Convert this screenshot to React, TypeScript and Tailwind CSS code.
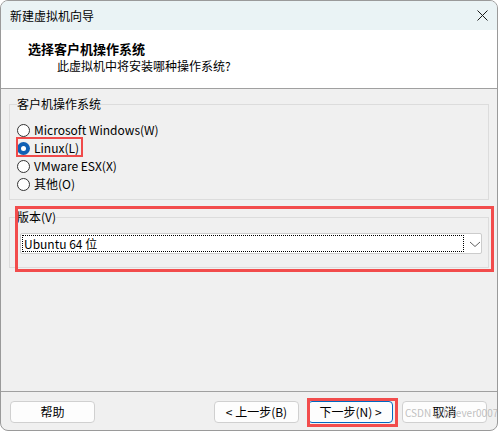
const font = { fontFamily: "'Noto Sans CJK SC', 'Noto Sans', sans-serif" };

function Radio({ label, checked }: { label: string; checked?: boolean }) {
  return (
    <div className="flex h-[18px] items-center gap-[4px] text-[12px] text-black">
      {checked ? (
        <span className="flex h-[13px] w-[13px] items-center justify-center rounded-full bg-[#0f5fb4]">
          <span className="h-[5px] w-[5px] rounded-full bg-white" />
        </span>
      ) : (
        <span className="h-[13px] w-[13px] rounded-full border border-[#333] bg-white" />
      )}
      <span className="leading-[18px]">{label}</span>
    </div>
  );
}

function Button({ children, primary }: { children: React.ReactNode; primary?: boolean }) {
  return (
    <button
      className={
        "flex h-[22px] w-[85px] items-center justify-center rounded-[4px] border bg-[#fdfdfd] text-[12px] leading-none text-black " +
        (primary ? "border-[#0067c0]" : "border-[#d0d0d0]")
      }
    >
      {children}
    </button>
  );
}

export default function App() {
  return (
    <div className="h-[431px] w-[499px] bg-white" style={font}>
      <div className="relative flex h-[431px] w-[498px] flex-col overflow-hidden rounded-[8px] border border-[#9a9a9a] bg-[#f0f0f0]">
        {/* title bar */}
        <div className="flex h-[29px] items-center justify-between bg-[#eaf3f5] pl-[9px] pr-[9px]">
          <span className="text-[12px] text-black">新建虚拟机向导</span>
          <svg width="11" height="11" viewBox="0 0 11 11">
            <path d="M0.5 0.5 L10.5 10.5 M10.5 0.5 L0.5 10.5" stroke="#1a1a1a" strokeWidth="1" fill="none" />
          </svg>
        </div>

        {/* header */}
        <div className="h-[59px] border-b border-[#a0a0a0] bg-white pt-[10px]">
          <div className="pl-[27px] text-[13px] font-bold leading-[18px] text-black">选择客户机操作系统</div>
          <div className="pl-[56px] text-[12px] leading-[16px] text-black">此虚拟机中将安装哪种操作系统?</div>
        </div>

        {/* body */}
        <div className="relative flex-1 px-[8px]">
          <fieldset className="mt-[7px] h-[104px] border border-[#dcdcdc] pl-[7px]">
            <legend className="text-[12px] leading-[16px] text-black">客户机操作系统</legend>
            <div className="mt-[9px] flex flex-col">
              <Radio label="Microsoft Windows(W)" />
              <Radio label="Linux(L)" checked />
              <Radio label="VMware ESX(X)" />
              <Radio label="其他(O)" />
            </div>
          </fieldset>

          <fieldset className="mt-[9px] h-[59px] border border-[#dcdcdc] pl-[7px]">
            <legend className="text-[12px] leading-[16px] text-black">版本(V)</legend>
            <div className="ml-[3px] mt-[8px] flex h-[21px] w-[462px] items-center rounded-[2px] border border-[#cccccc] bg-white pl-[1px]">
              <div className="flex h-[17px] w-[442px] items-center border border-dotted border-black pl-[1px] text-[12px] text-black">
                Ubuntu 64 位
              </div>
              <svg width="12" height="8" viewBox="0 0 12 8" className="ml-[5px]">
                <path d="M1 2 L6 6.5 L11 2" stroke="#606060" strokeWidth="1" fill="none" />
              </svg>
            </div>
          </fieldset>

          {/* red annotation: Linux */}
          <div className="pointer-events-none absolute left-[15px] top-[48px] h-[20px] w-[67px] border-2 border-[#f04a4a]" />
          {/* red annotation: version */}
          <div className="pointer-events-none absolute left-[14px] top-[117px] h-[66px] w-[479px] border-[3px] border-[#f24c4c]" />
        </div>

        {/* footer */}
        <div className="relative flex h-[39px] items-start border-t border-[#a0a0a0] pl-[9px] pt-[9px]">
          <Button>帮助</Button>
          <div className="ml-[119px] flex gap-[9px]">
            <Button>&lt; 上一步(B)</Button>
            <Button primary>下一步(N) &gt;</Button>
            <Button>取消</Button>
          </div>
          <div className="pointer-events-none absolute left-[306px] top-[6px] h-[29px] w-[91px] border-[3px] border-[#f24c4c]" />
          <span className="pointer-events-none absolute left-[404px] top-[14px] whitespace-nowrap text-[10px] leading-[14px] text-[#b0b0b0]/80">
            CSDN @forever0007
          </span>
        </div>
      </div>
    </div>
  );
}
